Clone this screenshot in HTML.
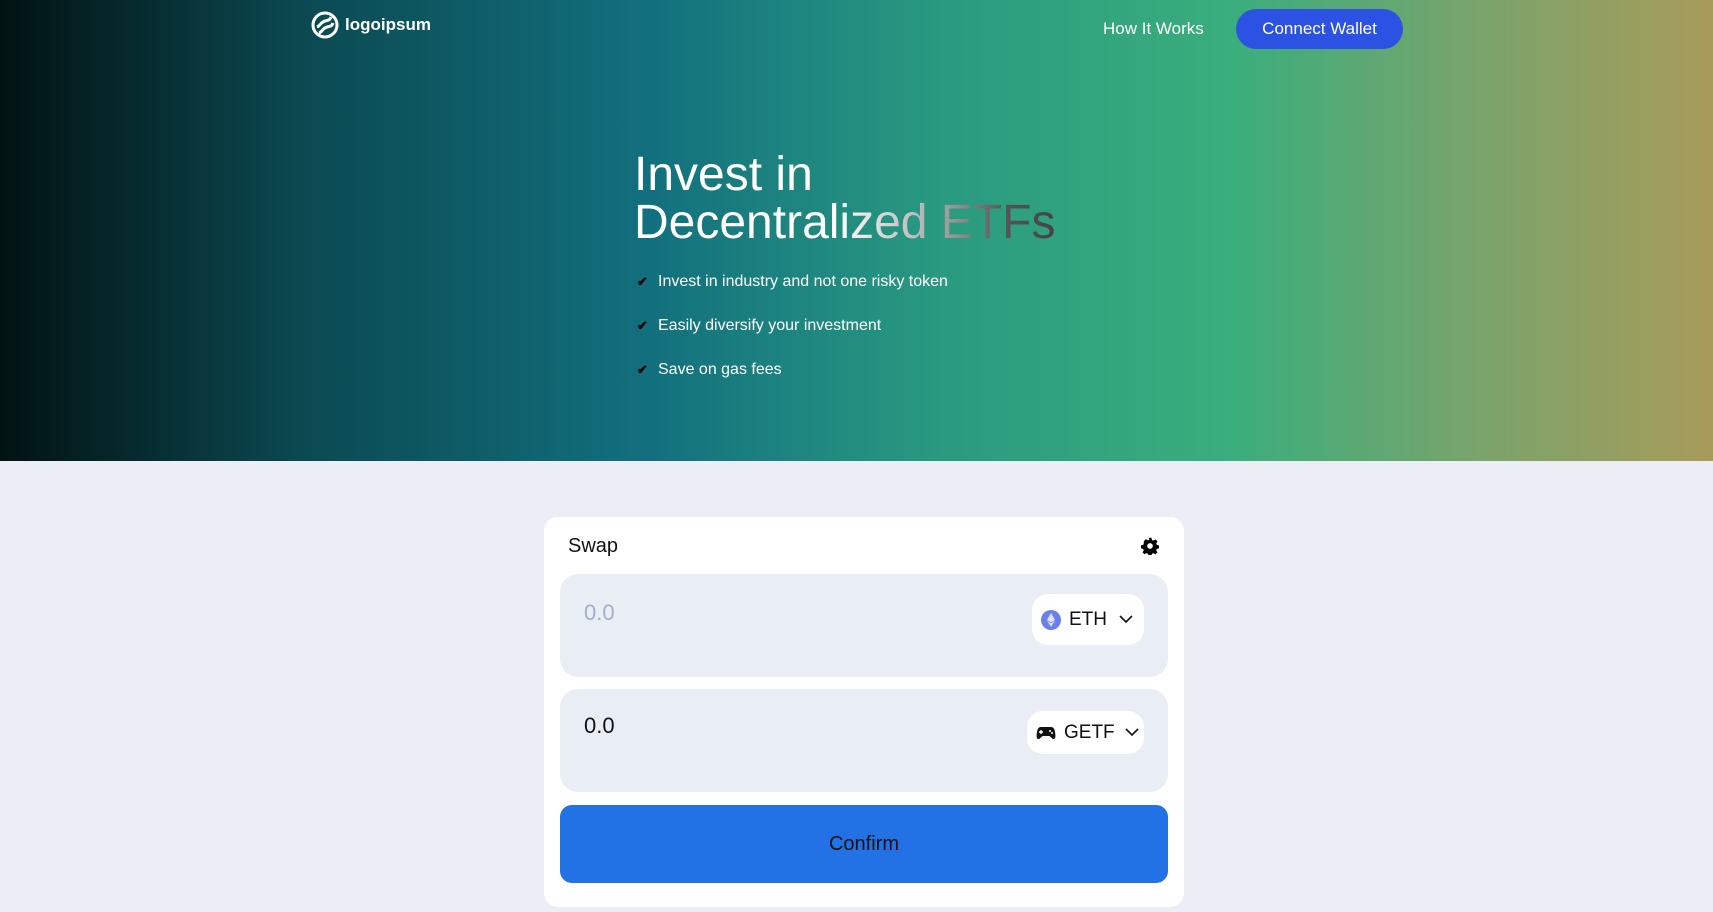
<!DOCTYPE html>
<html><head><meta charset="utf-8"><style>
*{margin:0;padding:0;box-sizing:border-box}
body{width:1713px;height:912px;overflow:hidden;background:#ebeff5;font-family:"Liberation Sans",sans-serif;position:relative}
.hero{position:absolute;left:0;top:0;width:1713px;height:461px;background:linear-gradient(90deg,#021212 0%,#0b4a52 18%,#12707e 38%,#2a9a80 55%,#3aae7c 72%,#78a46c 86%,#a89b5a 100%)}
.a{position:absolute}
.logo{left:311px;top:11px;color:#fff;font-weight:bold;font-size:17px;display:flex;align-items:center;gap:6px}
.nav{left:1103px;top:19px;color:#fff;font-size:17px}
.btn{left:1236px;top:9px;width:167px;height:40px;border-radius:20px;background:#2b52e3;color:#fff;font-size:17px;text-align:center;line-height:40px}
h1{position:absolute;left:634px;top:151px;font-weight:normal;font-size:48px;line-height:48px;color:#fff}
h1 .g{background:linear-gradient(90deg,#fff 0%,#fff 48%,#aaa 72%,#555 88%,#444 100%);-webkit-background-clip:text;background-clip:text;color:transparent}
.li{position:absolute;left:637px;color:#fff;font-size:16px}
.li b{display:inline-block;width:21px;color:#000;font-size:13px}
.card{left:544px;top:517px;width:640px;height:390px;background:#fff;border-radius:14px}
.box{position:absolute;left:16px;width:608px;height:103px;background:#e9eef5;border-radius:18px}
.pill{position:absolute;background:#fff;border-radius:16px;display:flex;align-items:center;font-size:19px;color:#111;gap:8px;padding-left:9px}
.num{position:absolute;left:24px;font-size:22px}
</style></head><body>
<div class="hero"></div>
<div class="a logo"><svg width="28" height="28" viewBox="0 0 28 28"><circle cx="14" cy="14" r="12" fill="none" stroke="#fff" stroke-width="3"/><path d="M6 16c3-1 4-5 8-6s5-1 6-4M8 22c3-1 4-5 8-6s5-1 6-4" fill="none" stroke="#fff" stroke-width="3"/></svg>logoipsum</div>
<div class="a nav">How It Works</div>
<div class="a btn">Connect Wallet</div>
<h1>Invest in<br><span class="g">Decentralized ETFs</span></h1>
<div class="li" style="top:273px"><b>✔</b>Invest in industry and not one risky token</div>
<div class="li" style="top:317px"><b>✔</b>Easily diversify your investment</div>
<div class="li" style="top:361px"><b>✔</b>Save on gas fees</div>
<div class="a card">
 <div class="a" style="left:24px;top:18px;font-size:20px;color:#111">Swap</div>
 <svg class="a" style="left:597px;top:20px" width="18" height="18" viewBox="0 0 24 24"><path fill="#000" fill-rule="evenodd" d="M10 1h4l.6 3 2 .9 2.6-1.7 2.8 2.8-1.7 2.6.9 2 3 .6v4l-3 .6-.9 2 1.7 2.6-2.8 2.8-2.6-1.7-2 .9-.6 3h-4l-.6-3-2-.9-2.6 1.7-2.8-2.8 1.7-2.6-.9-2-3-.6v-4l3-.6.9-2L3.7 5.6 6.5 2.8l2.6 1.7 2-.9zM12 8.2a3.8 3.8 0 100 7.6 3.8 3.8 0 000-7.6z"/></svg>
 <div class="box" style="top:57px"><div class="num" style="top:26px;color:#a3aec8">0.0</div>
  <div class="pill" style="left:472px;top:20px;width:112px;height:51px"><svg width="20" height="20" viewBox="0 0 20 20"><circle cx="10" cy="10" r="10" fill="#6a7fe8"/><path d="M10 3l4 7-4 2.3L6 10z M10 13.3l4-2.5-4 6-4-6z" fill="#dfe4fb"/></svg>ETH<svg width="14" height="9" viewBox="0 0 14 9" style="margin-left:4px"><path d="M1 1l6 6 6-6" fill="none" stroke="#111" stroke-width="1.6"/></svg></div></div>
 <div class="box" style="top:172px"><div class="num" style="top:24px;color:#111">0.0</div>
  <div class="pill" style="left:467px;top:22px;width:117px;height:43px"><svg width="20" height="14" viewBox="0 0 20 14"><path d="M5 1h10c2.5 0 3.5 2 4 5s1 7-1.5 7c-2 0-3-3-4.5-3H7c-1.5 0-2.5 3-4.5 3C0 13 .5 9 1 6s1.5-5 4-5z" fill="#111"/><path d="M5 4v4M3 6h4" stroke="#fff" stroke-width="1.4"/><circle cx="14" cy="5" r="1" fill="#fff"/><circle cx="16" cy="7" r="1" fill="#fff"/></svg><span>GETF</span><svg width="14" height="9" viewBox="0 0 14 9" style="margin-left:2px"><path d="M1 1l6 6 6-6" fill="none" stroke="#111" stroke-width="1.6"/></svg></div></div>
 <div class="a" style="left:16px;top:288px;width:608px;height:78px;background:#2272e6;border-radius:12px;text-align:center;line-height:78px;font-size:20px;color:#111">Confirm</div>
</div>
</body></html>
